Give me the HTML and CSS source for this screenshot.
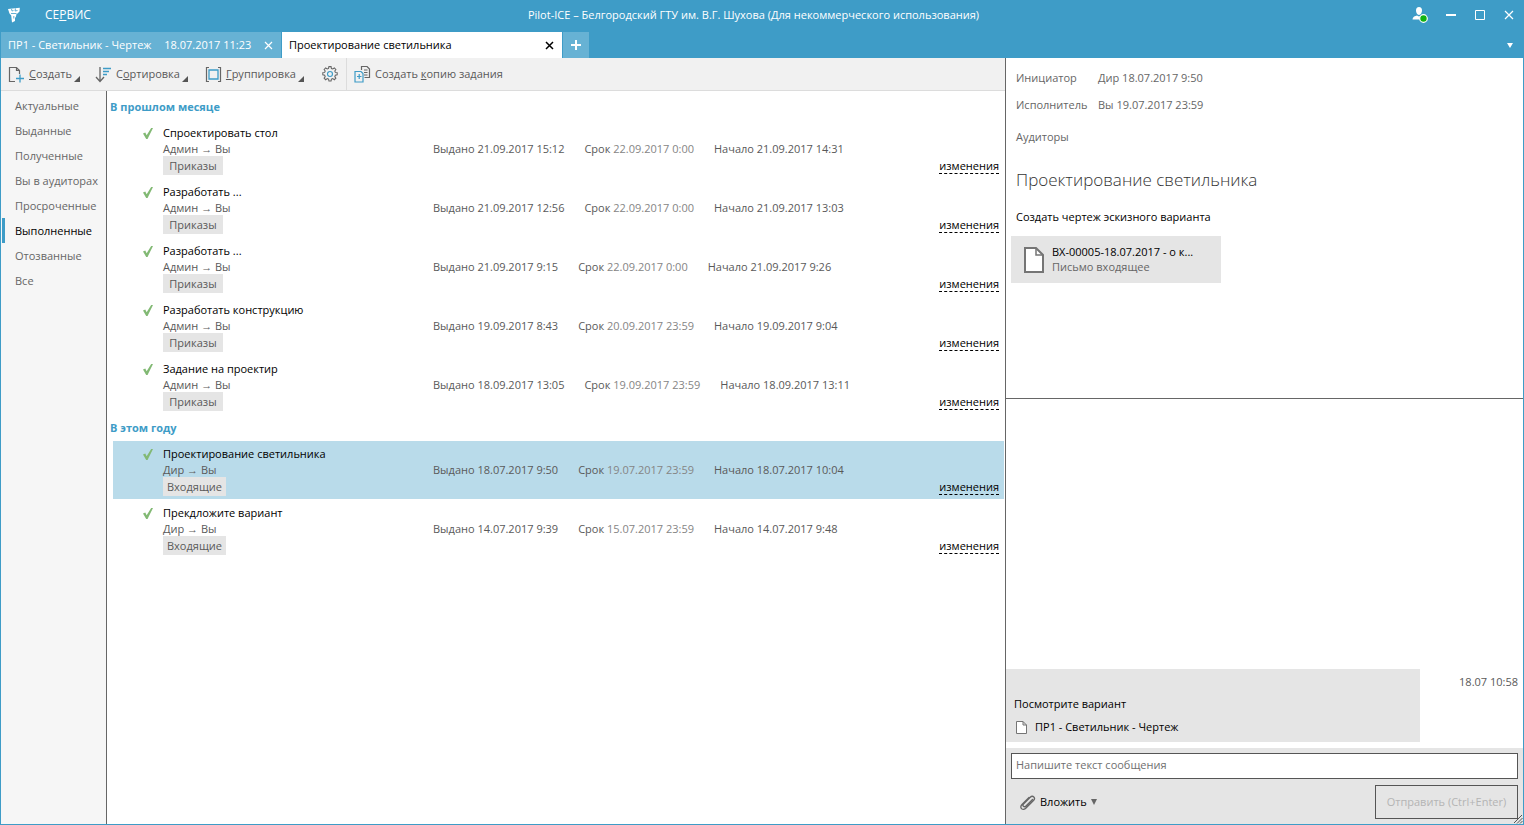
FILE: index.html
```html
<!DOCTYPE html>
<html lang="ru">
<head>
<meta charset="utf-8">
<title>Pilot-ICE</title>
<link rel="stylesheet" href="styles.css">
</head>
<body>
<div class="window">
  <header class="titlebar">
    <svg class="logo" width="14" height="16" viewBox="0 0 14 16"><path d="M1 2 12.800.800 12.500 4.500 10.500 6.500 9.500 7 9 9.500 8 11v3l-3 1.500-.8-7L2.500 6.500z" fill="#fff"/><path d="M4.500 2 5 4l1.500-.5M8.500 1.500 8 4l2.500-.5M4 6.500h5.500M6.800 9v2.500" fill="none" stroke="#3e9cc7" stroke-width=".8"/></svg>
    <button class="menu">СЕ<u>Р</u>ВИС</button>
    <h1 class="caption">Pilot-ICE – Белгородский ГТУ им. В.Г. Шухова (Для некоммерческого использования)</h1>
    <div class="controls">
      <button class="control" aria-label="Пользователь"><svg width="16" height="16" viewBox="0 0 16 16"><path d="M7 0c2 0 3 1.500 3 3.500S8.800 8 7 8 4 5.500 4 3.500 5 0 7 0zM.5 12.500C1 9.500 3 9 5 8.500l2 1 2-1 3 1v3z" fill="#fff"/><circle cx="11.500" cy="11.500" r="3.800" fill="#12b312" stroke="#fff" stroke-width="1.200"/></svg></button>
      <button class="control" aria-label="Свернуть"><svg width="12" height="12" viewBox="0 0 12 12"><path d="M1 6h10" stroke="#fff" stroke-width="2"/></svg></button>
      <button class="control" aria-label="Развернуть"><svg width="12" height="12" viewBox="0 0 12 12"><path d="M1.500 1.500h9v9h-9z" fill="none" stroke="#fff"/></svg></button>
      <button class="control" aria-label="Закрыть"><svg width="12" height="12" viewBox="0 0 12 12"><path d="m2 2 8 8m0-8-8 8" stroke="#fff" stroke-width="1.200"/></svg></button>
    </div>
  </header>

  <nav class="tabs">
    <div class="tab">
      <button class="tab-name">ПР1 - Светильник - Чертеж <span class="tab-date">18.07.2017 11:23</span></button>
      <button class="tab-close" aria-label="Закрыть вкладку"><svg width="9" height="9" viewBox="0 0 9 9"><path d="m1 1 7 7m0-7-7 7" stroke="currentColor" stroke-width="1.200"/></svg></button>
    </div>
    <div class="tab tab-active">
      <button class="tab-name">Проектирование светильника</button>
      <button class="tab-close" aria-label="Закрыть вкладку"><svg width="9" height="9" viewBox="0 0 9 9"><path d="m1 1 7 7m0-7-7 7" stroke="currentColor" stroke-width="1.500"/></svg></button>
    </div>
    <button class="tab-add" aria-label="Новая вкладка"><svg width="10" height="10" viewBox="0 0 10 10"><path d="M0 5h10M5 0v10" stroke="#fff" stroke-width="2"/></svg></button>
    <button class="tab-list" aria-label="Список вкладок"><svg width="6" height="5" viewBox="0 0 6 5"><path d="M0 0h6L3 5z" fill="#fff"/></svg></button>
  </nav>

  <div class="workspace">
    <div class="main">
      <div class="toolbar">
        <button class="tool tool-create"><svg width="17" height="17" viewBox="0 0 17 17"><path d="M7 15.500H1.500v-14h7l3 3V8M8.500 1.500v3h3" fill="none" stroke="#666" stroke-width="1.200"/><path d="M8 12.500h8M12 8.500v8" stroke="#3e9cc7" stroke-width="1.300"/></svg><span><u>С</u>оздать</span><i class="corner"></i></button>
        <button class="tool tool-sort"><svg width="17" height="17" viewBox="0 0 17 17"><path d="M5 1v14M1 11l4 4.500L9 11" fill="none" stroke="#666" stroke-width="1.300"/><path d="M8 2.500h8M8 5.500h6M8 8.500h4" stroke="#3e9cc7" stroke-width="1.400"/></svg><span>С<u>о</u>ртировка</span><i class="corner"></i></button>
        <button class="tool tool-group"><svg width="17" height="17" viewBox="0 0 17 17"><path d="M4 1.500H1.500v14H4M13 1.500h2.500v14H13" fill="none" stroke="#666" stroke-width="1.200"/><path d="M4 4h9v9H4z" fill="none" stroke="#3e9cc7" stroke-width="1.300"/></svg><span><u>Г</u>руппировка</span><i class="corner"></i></button>
        <button class="tool tool-settings" aria-label="Настройки"><svg width="16" height="16" viewBox="0 0 18 18"><path d="m7.500 1.500.3-.8h2.400l.4 2.100 1.500.6 1.800-1.200 1.700 1.700-1.200 1.800.6 1.500 2.100.4v2.400l-2.100.4-.6 1.500 1.200 1.800-1.700 1.700-1.800-1.200-1.500.6-.4 2.100H7.800l-.4-2.100-1.500-.6-1.800 1.200-1.700-1.700 1.200-1.800-.6-1.500L.9 10V7.600L3 7.200l.6-1.500-1.200-1.800 1.700-1.700 1.800 1.200 1.500-.6z" fill="none" stroke="#666" stroke-width="1.200"/><circle cx="9" cy="9" r="2.800" fill="none" stroke="#3e9cc7" stroke-width="1.300"/></svg></button>
        <button class="tool tool-copy"><svg width="17" height="17" viewBox="0 0 17 17"><path d="M7.500 4V.500h5.500l2.500 2.500v8.500h-5" fill="none" stroke="#666" stroke-width="1.200"/><path d="M10 4h3.500M10 6.500h3.500M10 9h3.500" stroke="#666"/><path d="M1 5.500h6l2 2v8.500H1zM3 10.500h4.500M5.200 8v5" fill="none" stroke="#3e9cc7" stroke-width="1.200"/></svg><span>Создать <u>к</u>опию задания</span></button>
      </div>

      <div class="body">
        <nav class="filters">
          <button class="filter">Актуальные</button>
          <button class="filter">Выданные</button>
          <button class="filter">Полученные</button>
          <button class="filter">Вы в аудиторах</button>
          <button class="filter">Просроченные</button>
          <button class="filter filter-active">Выполненные</button>
          <button class="filter">Отозванные</button>
          <button class="filter">Все</button>
        </nav>

        <main class="tasks">
          <h2 class="group">В прошлом месяце</h2>
          <article class="task">
            <svg class="check" width="10" height="11" viewBox="0 0 11 12"><path d="M0 6 2.500 5 4 8 9 0h2L5 12H3.500z"/></svg>
            <div class="who"><h3>Спроектировать стол</h3><p>Админ <span class="arrow">→</span> Вы</p><span class="tag">Приказы</span></div>
            <div class="dates"><span>Выдано 21.09.2017 15:12</span><span class="due">Срок <i>22.09.2017 0:00</i></span><span>Начало 21.09.2017 14:31</span></div>
            <a class="changes" href="#">изменения</a>
          </article>
          <article class="task">
            <svg class="check" width="10" height="11" viewBox="0 0 11 12"><path d="M0 6 2.500 5 4 8 9 0h2L5 12H3.500z"/></svg>
            <div class="who"><h3>Разработать ...</h3><p>Админ <span class="arrow">→</span> Вы</p><span class="tag">Приказы</span></div>
            <div class="dates"><span>Выдано 21.09.2017 12:56</span><span class="due">Срок <i>22.09.2017 0:00</i></span><span>Начало 21.09.2017 13:03</span></div>
            <a class="changes" href="#">изменения</a>
          </article>
          <article class="task">
            <svg class="check" width="10" height="11" viewBox="0 0 11 12"><path d="M0 6 2.500 5 4 8 9 0h2L5 12H3.500z"/></svg>
            <div class="who"><h3>Разработать ...</h3><p>Админ <span class="arrow">→</span> Вы</p><span class="tag">Приказы</span></div>
            <div class="dates"><span>Выдано 21.09.2017 9:15</span><span class="due">Срок <i>22.09.2017 0:00</i></span><span>Начало 21.09.2017 9:26</span></div>
            <a class="changes" href="#">изменения</a>
          </article>
          <article class="task">
            <svg class="check" width="10" height="11" viewBox="0 0 11 12"><path d="M0 6 2.500 5 4 8 9 0h2L5 12H3.500z"/></svg>
            <div class="who"><h3>Разработать конструкцию</h3><p>Админ <span class="arrow">→</span> Вы</p><span class="tag">Приказы</span></div>
            <div class="dates"><span>Выдано 19.09.2017 8:43</span><span class="due">Срок <i>20.09.2017 23:59</i></span><span>Начало 19.09.2017 9:04</span></div>
            <a class="changes" href="#">изменения</a>
          </article>
          <article class="task">
            <svg class="check" width="10" height="11" viewBox="0 0 11 12"><path d="M0 6 2.500 5 4 8 9 0h2L5 12H3.500z"/></svg>
            <div class="who"><h3>Задание на проектир</h3><p>Админ <span class="arrow">→</span> Вы</p><span class="tag">Приказы</span></div>
            <div class="dates"><span>Выдано 18.09.2017 13:05</span><span class="due">Срок <i>19.09.2017 23:59</i></span><span>Начало 18.09.2017 13:11</span></div>
            <a class="changes" href="#">изменения</a>
          </article>
          <h2 class="group">В этом году</h2>
          <article class="task task-selected">
            <svg class="check" width="10" height="11" viewBox="0 0 11 12"><path d="M0 6 2.500 5 4 8 9 0h2L5 12H3.500z"/></svg>
            <div class="who"><h3>Проектирование светильника</h3><p>Дир <span class="arrow">→</span> Вы</p><span class="tag">Входящие</span></div>
            <div class="dates"><span>Выдано 18.07.2017 9:50</span><span class="due">Срок <i>19.07.2017 23:59</i></span><span>Начало 18.07.2017 10:04</span></div>
            <a class="changes" href="#">изменения</a>
          </article>
          <article class="task">
            <svg class="check" width="10" height="11" viewBox="0 0 11 12"><path d="M0 6 2.500 5 4 8 9 0h2L5 12H3.500z"/></svg>
            <div class="who"><h3>Прекдложите вариант</h3><p>Дир <span class="arrow">→</span> Вы</p><span class="tag">Входящие</span></div>
            <div class="dates"><span>Выдано 14.07.2017 9:39</span><span class="due">Срок <i>15.07.2017 23:59</i></span><span>Начало 14.07.2017 9:48</span></div>
            <a class="changes" href="#">изменения</a>
          </article>
        </main>
      </div>
    </div>

    <aside class="side">
      <section class="details">
        <dl class="people">
          <dt>Инициатор</dt><dd>Дир 18.07.2017 9:50</dd>
          <dt>Исполнитель</dt><dd>Вы 19.07.2017 23:59</dd>
          <dt class="auditors">Аудиторы</dt><dd></dd>
        </dl>
        <h2 class="subject">Проектирование светильника</h2>
        <p class="description">Создать чертеж эскизного варианта</p>
        <button class="attachment">
          <svg width="20" height="26" viewBox="0 0 20 26"><path d="M1 1h11l7 7v17H1z" fill="#fff" stroke="#757575" stroke-width="2"/><path d="M12 1v7h7" fill="none" stroke="#757575" stroke-width="1.500"/></svg>
          <span class="attachment-text"><span>ВХ-00005-18.07.2017 - о к...</span><span class="kind">Письмо входящее</span></span>
        </button>
      </section>
      <section class="chat">
        <div class="message">
          <p>Посмотрите вариант</p>
          <a class="file" href="#"><svg width="11" height="13" viewBox="0 0 11 13"><path d="M.5.500H7L10.500 4v8.500H.5zM7 .5V4h3.500" fill="#fff" stroke="#757575"/></svg>ПР1 - Светильник - Чертеж</a>
        </div>
        <time class="sent">18.07 10:58</time>
      </section>
      <form class="composer">
        <input class="input" type="text" aria-label="Сообщение" placeholder="Напишите текст сообщения">
        <div class="actions">
          <button class="attach" type="button"><svg width="16" height="17" viewBox="0 0 16 17"><path d="M12.500 5.500 6 12c-2 2-4-.5-2.500-2L10 3.500c3-3 6 .5 3.500 3L6 14c-3 3.500-7 0-4-3.500L9 3.500" fill="none" stroke="#666" stroke-width="1.300" stroke-linecap="round"/></svg><span>Вложить</span><svg width="6" height="6" viewBox="0 0 6 6"><path d="M0 0h6L3 6z" fill="#666"/></svg></button>
          <button class="send" type="submit" disabled>Отправить (Ctrl+Enter)</button>
        </div>
        <svg class="grip" width="10" height="10" viewBox="0 0 10 10"><path d="m1 9 8-8M4 9.500 9.500 4M7 9.500 9.500 7" stroke="#555"/></svg>
      </form>
    </aside>
  </div>
</div>
</body>
</html>
```
FILE: styles.css
```css
* { box-sizing: border-box; }

body {
  margin: 0;
  font: 11px/16px "Open Sans", "Noto Sans", sans-serif;
  color: #000;
}

button, input { font: inherit; color: inherit; }
button { padding: 0; border: 0; background: none; text-align: left; white-space: nowrap; }
h1, h2, h3, p, dl, dd { margin: 0; font: inherit; }
svg { display: block; flex: none; }
i { font-style: normal; }

.window {
  display: flex;
  flex-direction: column;
  height: 100vh;
  border: 1px solid #3e9cc7;
  border-top: 0;
  background: #fff;
}

/* Title bar */
.titlebar { display: flex; align-items: center; height: 32px; padding-bottom: 3px; background: #3e9cc7; color: #fff; }
.logo { margin-left: 6px; }
.menu { margin-left: 24px; width: 50px; font-size: 12px; }
.caption { flex: 1; text-align: center; white-space: nowrap; overflow: hidden; }
.controls { display: flex; gap: 17px; align-items: center; padding-right: 8px; }

/* Tabs */
.tabs { display: flex; gap: 1px; height: 26px; background: #3e9cc7; color: #fff; }
.tab { display: flex; align-items: center; justify-content: space-between; width: 280px; padding: 0 8px 0 7px; background: #67b2d4; }
.tab-date { margin-left: 10px; }
.tab-active { background: #fff; color: #000; }
.tab-add { display: grid; place-items: center; width: 26px; background: #67b2d4; }
.tab-list { margin-left: auto; padding-right: 10px; }

.workspace { display: grid; grid-template-columns: minmax(0, 1004fr) minmax(0, 518fr); flex: 1; min-height: 0; }
.main { display: flex; flex-direction: column; min-width: 0; }

/* Toolbar */
.toolbar { display: flex; height: 33px; border-bottom: 1px solid #dcdcdc; background: #f1f1f1; color: #595959; }
.tool { display: flex; align-items: center; gap: 4px; padding-left: 7px; }
.corner { align-self: flex-end; margin: 0 0 8px -2px; border: solid transparent; border-width: 0 0 6px 6px; border-bottom-color: #555; }
.tool-sort { padding-left: 15px; }
.tool-group { padding-left: 17px; }
.tool-settings { padding: 0 8px 0 18px; }
.tool-copy { border-left: 1px solid #dcdcdc; }

.body { display: flex; flex: 1; min-height: 0; }

/* Filters */
.filters { display: flex; flex-direction: column; width: 106px; padding: 2px 0 0 1px; border-right: 1px solid #666; background: #f6f6f6; color: #666; }
.filter { height: 25px; padding-left: 10px; border-left: 3px solid transparent; }
.filter-active { border-color: #3e9cc7; color: #000; }

/* Task list */
.tasks { flex: 1; min-width: 0; padding: 3px 1px 0 3px; overflow: hidden; }
.group { color: #3e9cc7; font-weight: 700; line-height: 26px; }
.task { display: grid; grid-template-columns: 50px 270px 1fr auto; height: 58px; margin: 0 0 1px 3px; padding-top: 5px; color: #595959; }
.task-selected { background: #b9dbea; }
.check { margin: 3px 0 0 30px; fill: #82b974; }
.who { white-space: nowrap; }
.who h3 { color: #000; }
.who p { height: 15px; line-height: 15px; }
.arrow { font-family: "Liberation Sans", sans-serif; }
.tag { display: inline-block; min-width: 60px; padding: 0 4px; background: #e5e5e5; line-height: 19px; text-align: center; }
.dates { display: flex; gap: 20px; padding-top: 16px; white-space: nowrap; }
.due i { color: #858585; }
.changes { align-self: end; margin: 0 5px 4px 0; border-bottom: 1px dashed #000; color: #000; line-height: 14px; text-decoration: none; }

/* Details */
.side { display: flex; flex-direction: column; min-width: 0; border-left: 1px solid #666; }
.details { flex: 328 1 0; padding: 12px 10px 0; border-bottom: 1px solid #666; color: #666; }
.people { display: grid; grid-template-columns: 82px 1fr; row-gap: 11px; }
.auditors { padding-top: 5px; }
.subject { margin-top: 22px; color: #333; font-size: 17px; font-weight: 300; line-height: 26px; }
.description { margin-top: 16px; color: #000; }
.attachment { display: flex; align-items: center; gap: 8px; width: 210px; height: 47px; margin: 11px 0 0 -5px; padding-left: 13px; background: #e5e5e5; color: #000; }
.attachment-text { display: grid; padding-bottom: 1px; line-height: 15px; }
.kind { color: #666; }

/* Chat */
.chat { display: flex; flex: 343 1 0; justify-content: space-between; align-items: flex-end; padding-bottom: 6px; }
.message { width: 80%; height: 73px; padding: 27px 8px 0; background: #e5e5e5; }
.file { display: flex; gap: 8px; align-items: center; margin: 7px 0 0 2px; color: #000; text-decoration: none; }
.sent { height: 68px; padding-right: 5px; color: #595959; }

/* Composer */
.composer { position: relative; padding: 5px; background: #e5e5e5; }
.input { display: block; width: 100%; height: 26px; padding: 0 4px 3px; border: 1px solid #555; background: #fff; }
.input::placeholder { color: #707070; opacity: 1; }
.actions { display: flex; justify-content: space-between; align-items: center; margin-top: 6px; }
.attach { display: flex; align-items: center; gap: 4px; padding-left: 9px; }
.send { width: 143px; height: 34px; border: 1px solid #555; color: #b4b4b4; text-align: center; }
.grip { position: absolute; right: 0; bottom: 0; }
```
